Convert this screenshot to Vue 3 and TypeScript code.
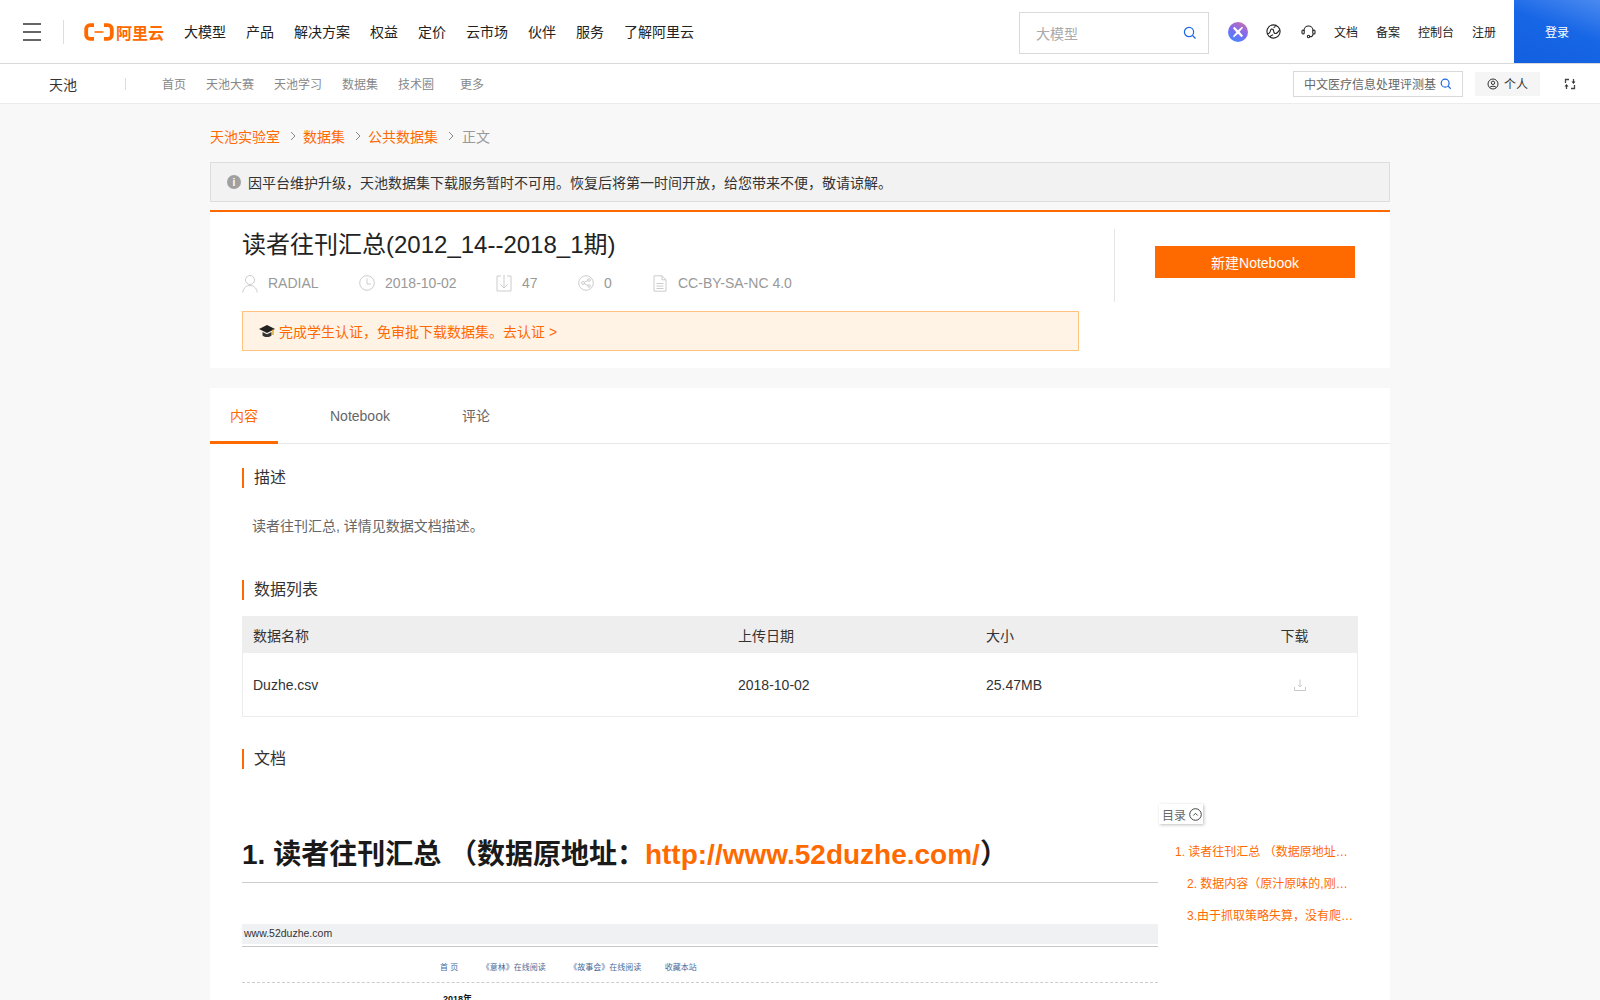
<script setup lang="ts">
const mainNav = ['大模型', '产品', '解决方案', '权益', '定价', '云市场', '伙伴', '服务', '了解阿里云']
const subNav = ['首页', '天池大赛', '天池学习', '数据集', '技术圈']
const links = ['文档', '备案', '控制台', '注册']
const toc = [
  { text: '1. 读者往刊汇总 （数据原地址：http://www.52duzhe.com/）', nested: false },
  { text: '2. 数据内容（原汁原味的,刚爬取下来的数据）', nested: true },
  { text: '3.由于抓取策略失算，没有爬取到全部数据', nested: true },
]
</script>

<template>
  <div class="page">
    <header class="top">
      <div class="burger"><i></i><i></i><i></i></div>
      <span class="top-div"></span>
      <div class="logo">
        <svg width="30" height="18" viewBox="0 0 30 18" fill="none">
          <path d="M10 2.200H6C3.800 2.200 2.200 3.800 2.200 6v6c0 2.200 1.600 3.800 3.800 3.800h4M20 2.200h4c2.200 0 3.800 1.600 3.800 3.800v6c0 2.200-1.600 3.800-3.800 3.800h-4" stroke="#ff6a00" stroke-width="3.800"/>
          <path d="M10.500 9h9" stroke="#ff6a00" stroke-width="1.600"/>
        </svg>
        <span>阿里云</span>
      </div>
      <nav class="main-nav"><a v-for="n in mainNav" :key="n">{{ n }}</a></nav>
      <div class="top-search">
        <span>大模型</span>
        <svg class="ico" width="14" height="14" viewBox="0 0 14 14" fill="none" stroke="#1a66e5" stroke-width="1.200"><circle cx="6" cy="6" r="4.600"/><path d="M9.500 9.500 12.500 12.500"/></svg>
      </div>
      <div class="top-x">
        <svg width="14" height="14" viewBox="0 0 14 14" fill="#fff"><path d="M2 3.200 3.400 1.800 7 5.200l4-3.400 1 1-3.400 4L12 10.800l-1.400 1.400L7 8.800l-4 3.400-1-1 3.400-4z"/></svg>
      </div>
      <svg class="globe" width="15" height="15" viewBox="0 0 15 15" fill="none" stroke="#222" stroke-width="1.100"><circle cx="7.500" cy="7.500" r="6.600"/><path d="M1.200 9.500c1.800.8 3-1.200 3.300-3 .3-1.500 1.500-1.800 2.500-1 1 1 .4 3 1.600 3.800 1.500 1 3.800-1.200 5-3.500M4 13c.7-1.600 1.900-2 3.200-2.300M9.500 1.500C9.200 2.900 8.500 3.400 7.600 3.600"/></svg>
      <svg class="headset" width="15" height="15" viewBox="0 0 15 15" fill="none" stroke="#222" stroke-width="1.100"><path d="M3 7V6.500a4.500 4.500 0 0 1 9 0V7"/><rect x="1" y="6" width="2.200" height="4" rx="1"/><rect x="11.800" y="6" width="2.200" height="4" rx="1"/><path d="M12 10c0 1.800-1.500 2.800-3.300 2.800"/><circle cx="7.500" cy="12.500" r="1.200"/></svg>
      <div class="top-links"><a v-for="l in links" :key="l">{{ l }}</a></div>
      <button class="login">登录</button>
    </header>

    <div class="sub">
      <span class="sub-brand">天池</span>
      <span class="sub-div"></span>
      <nav class="sub-nav">
        <a v-for="n in subNav" :key="n">{{ n }}</a>
        <a class="more">更多</a>
      </nav>
      <div class="sub-search">
        <span>中文医疗信息处理评测基</span>
        <svg width="12" height="12" viewBox="0 0 14 14" fill="none" stroke="#1a66e5" stroke-width="1.400"><circle cx="6" cy="6" r="4.600"/><path d="M9.500 9.500 12.500 12.500"/></svg>
      </div>
      <div class="personal">
        <svg width="12" height="12" viewBox="0 0 12 12" fill="none" stroke="#333"><circle cx="6" cy="6" r="5"/><circle cx="6" cy="4.800" r="1.700"/><path d="M2.800 9.500C3.500 7.800 8.500 7.800 9.200 9.500"/></svg>
        <span>个人</span>
      </div>
      <svg class="swap" width="12" height="12" viewBox="0 0 12 12" fill="none" stroke="#444" stroke-width="1.300"><path d="M5 1.500H1.500v3.500M7 10.500h3.500V7M9.500 1v3M2.500 8v3"/><path d="M7.500 3.500h4L9.500 6zM.5 8.500h4L2.500 6z" fill="#333" stroke="none"/></svg>
    </div>

    <main class="wrap">
      <div class="crumbs">
        <a>天池实验室</a><svg class="chev" width="6" height="10" viewBox="0 0 6 10" fill="none" stroke="#888"><path d="M1 1l4 4-4 4"/></svg>
        <a>数据集</a><svg class="chev" width="6" height="10" viewBox="0 0 6 10" fill="none" stroke="#888"><path d="M1 1l4 4-4 4"/></svg>
        <a>公共数据集</a><svg class="chev" width="6" height="10" viewBox="0 0 6 10" fill="none" stroke="#888"><path d="M1 1l4 4-4 4"/></svg>
        <span>正文</span>
      </div>

      <div class="notice">
        <span class="info">i</span>
        <span>因平台维护升级，天池数据集下载服务暂时不可用。恢复后将第一时间开放，给您带来不便，敬请谅解。</span>
      </div>

      <section class="head-card">
        <div class="head-left">
          <h1>读者往刊汇总(2012_14--2018_1期)</h1>
          <div class="meta">
            <span class="m m1">
              <svg width="16" height="19" viewBox="0 0 16 19" fill="none" stroke="#ccc"><circle cx="8" cy="6" r="4.500"/><path d="M.8 18.500C1.500 13 5 11.500 8 11.500s6.500 1.500 7.200 7"/></svg>
              RADIAL</span>
            <span class="m m2">
              <svg width="16" height="16" viewBox="0 0 16 16" fill="none" stroke="#ccc"><circle cx="8" cy="8" r="7.300"/><path d="M8 3.500V9h4"/></svg>
              2018-10-02</span>
            <span class="m m3">
              <svg width="16" height="18" viewBox="0 0 16 18" fill="none" stroke="#ccc"><path d="M5 2H1v15h14V2h-4M8 1v13M4.500 10.500 8 14l3.500-3.500"/></svg>
              47</span>
            <span class="m m4">
              <svg width="16" height="16" viewBox="0 0 16 16" fill="none" stroke="#ccc"><circle cx="8" cy="8" r="7.300"/><circle cx="5" cy="8" r="1.500"/><circle cx="11" cy="5" r="1.300"/><circle cx="11" cy="11" r="1.300"/><path d="M6.300 7.300 9.800 5.600M6.300 8.700l3.500 1.700"/></svg>
              0</span>
            <span class="m m5">
              <svg width="14" height="17" viewBox="0 0 14 17" fill="none" stroke="#ccc"><path d="M1 .8h8l4 4v11.400H1zM9 .8v4h4M3.500 8.500h7M3.500 11h7M3.500 13.500h7"/></svg>
              CC-BY-SA-NC 4.0</span>
          </div>
          <div class="cert">
            <svg width="16" height="15" viewBox="0 0 16 15"><path d="M8 1 0 5l8 4 8-4z" fill="#222"/><path d="M3.500 8v3.500c2.500 2 6.500 2 9 0V8L8 10.200z" fill="#333"/><path d="M14 5.500V11" stroke="#d9a520" stroke-width="1.400"/></svg>
            <span>完成学生认证，免审批下载数据集。去认证 &gt;</span>
          </div>
        </div>
        <div class="head-right"><button class="nb-btn">新建Notebook</button></div>
      </section>

      <section class="content">
        <div class="tabs">
          <a class="tab active">内容</a>
          <a class="tab">Notebook</a>
          <a class="tab">评论</a>
        </div>
        <div class="body">
          <h2 class="sec first">描述</h2>
          <p class="desc">读者往刊汇总, 详情见数据文档描述。</p>
          <h2 class="sec list-title">数据列表</h2>
          <div class="table">
            <div class="row th">
              <span class="c1">数据名称</span><span class="c2">上传日期</span><span class="c3">大小</span><span class="c4">下载</span>
            </div>
            <div class="row td">
              <span class="c1">Duzhe.csv</span><span class="c2">2018-10-02</span><span class="c3">25.47MB</span>
              <span class="c4"><svg width="12" height="12" viewBox="0 0 12 12" fill="none" stroke="#c8c8c8"><path d="M.5 8v3.500h11V8M6 .5v7M4 5.800 6 7.800l2-2"/></svg></span>
            </div>
          </div>
          <h2 class="sec doc-title">文档</h2>
          <div class="doc">
            <div class="doc-main">
              <h1 class="doc-h1">1. 读者往刊汇总 （数据原地址：<a>http://www.52duzhe.com/</a>）</h1>
              <div class="shot">
                <div class="shot-bar">www.52duzhe.com</div>
                <div class="shot-nav"><span>首 页</span><span>《意林》在线阅读</span><span>《故事会》在线阅读</span><span>收藏本站</span></div>
                <div class="shot-year">2018年</div>
              </div>
            </div>
            <aside class="toc">
              <div class="toc-btn">目录
                <svg width="13" height="13" viewBox="0 0 13 13" fill="none" stroke="#444"><circle cx="6.500" cy="6.500" r="5.800"/><path d="M4.300 7.500 6.500 5.300l2.200 2.200"/></svg>
              </div>
              <a v-for="t in toc" :key="t.text" class="toc-item" :class="{ nested: t.nested }">{{ t.text }}</a>
            </aside>
          </div>
        </div>
      </section>
    </main>
  </div>
</template>

<style>
html, body { margin: 0; background: #f8f8f8; overflow: hidden; }
</style>

<style scoped>
* { box-sizing: border-box; }
.page { height: 1000px; overflow: hidden; font-family: "Liberation Sans", "Noto Sans CJK SC", sans-serif; font-size: 14px; color: #333; background: #f8f8f8; }
a { color: inherit; }

.top { height: 64px; background: #fff; border-bottom: 1px solid #d9d9d9; display: flex; align-items: center; padding-left: 23px; }
.burger { width: 18px; display: flex; flex-direction: column; gap: 6px; }
.burger i { display: block; height: 2px; background: #666; }
.top-div { width: 1px; height: 24px; background: #ddd; margin-left: 22px; }
.logo { display: flex; align-items: center; gap: 2px; margin-left: 20px; color: #ff6a00; font-size: 16px; font-weight: 700; width: 80px; }
.main-nav { display: flex; gap: 20px; margin-left: 20px; color: #222; padding-bottom: 1px; }
.top-search { margin-left: auto; margin-right: 1px; margin-top: 2px; width: 190px; height: 42px; border: 1px solid #d9d9d9; display: flex; align-items: center; justify-content: space-between; padding: 0 11px 0 16px; color: #aaa; }
.top-x { width: 20px; height: 20px; border-radius: 50%; margin-left: 18px; background: linear-gradient(205deg, #d56ca6 0%, #7c6cf0 50%, #3a8cff 100%); display: flex; align-items: center; justify-content: center; }
.globe { margin-left: 18px; }
.headset { margin-left: 20px; }
.top-links { display: flex; gap: 18px; font-size: 12px; color: #222; margin-left: 18px; }
.login { width: 86px; height: 63px; margin-left: 18px; border: 0; color: #fff; font: inherit; font-size: 12px; background: linear-gradient(200deg, #4a8af0 0%, #1766e6 45%, #1260e0 100%); }

.sub { height: 40px; background: #fff; border-bottom: 1px solid #ececec; display: flex; align-items: center; padding-left: 49px; }
.sub-brand { color: #333; font-size: 14px; width: 28px; }
.sub-div { width: 1px; height: 12px; background: #ddd; margin-left: 48px; }
.sub-nav { display: flex; gap: 20px; margin-left: 36px; font-size: 12px; color: #888; }
.sub-nav .more { margin-left: 6px; }
.sub-search { margin-left: auto; width: 170px; height: 26px; border: 1px solid #d9d9d9; display: flex; align-items: center; justify-content: space-between; padding: 0 10px 0 10px; font-size: 12px; color: #666; }
.personal { width: 65px; height: 24px; margin-left: 12px; background: #f5f5f5; display: flex; align-items: center; gap: 5px; padding-left: 12px; font-size: 12px; color: #333; }
.swap { margin: 0 24px 0 24px; }

.wrap { width: 1180px; margin: 0 auto; }
.crumbs { height: 58px; padding-top: 5px; display: flex; align-items: center; color: #ff6a00; }
.crumbs .chev { margin: 0 7px 0 10px; }
.crumbs span { color: #999; margin-left: 1px; }
.notice { height: 40px; background: #f2f2f2; border: 1px solid #ddd; display: flex; align-items: center; gap: 7px; padding-left: 16px; color: #333; }
.info { width: 14px; height: 14px; border-radius: 50%; background: #a0a0a0; color: #fff; font-size: 10px; font-weight: 700; display: flex; align-items: center; justify-content: center; }

.head-card { margin-top: 8px; height: 158px; background: #fff; border-top: 2px solid #ff6a00; display: flex; }
.head-left { width: 904px; padding: 0 0 0 32px; }
.head-left h1 { margin: 16px 0 0; font-size: 24px; font-weight: 400; line-height: 33px; color: #222; }
.meta { display: flex; align-items: center; height: 20px; margin-top: 12px; color: #999; }
.m { display: flex; align-items: center; gap: 10px; }
.m1 { width: 117px; }
.m1 svg { margin-top: 1px; }
.m2 { width: 137px; gap: 10px; }
.m3 { width: 82px; gap: 10px; }
.m4 { width: 75px; gap: 10px; }
.m5 { gap: 11px; }
.cert { margin-top: 18px; width: 837px; height: 40px; border: 1px solid #ffc27f; background: #fff3e6; display: flex; align-items: center; gap: 4px; padding-left: 16px; color: #ff6a00; }
.head-right { margin-top: 17px; height: 73px; width: 276px; border-left: 1px solid #e5e5e5; padding: 17px 0 0 40px; }
.nb-btn { width: 200px; height: 32px; border: 0; background: #ff6a00; color: #fff; font: inherit; }

.content { margin-top: 20px; background: #fff; height: 700px; }
.tabs { display: flex; height: 56px; border-bottom: 1px solid #e8e8e8; gap: 32px; }
.tab { height: 56px; padding: 0 20px; line-height: 56px; color: #666; }
.tab.active { color: #ff6a00; border-bottom: 3px solid #ff6a00; }
.body { padding: 0 32px; }
.sec { margin: 0; height: 20px; line-height: 20px; border-left: 2px solid #ff6a00; padding-left: 10px; font-size: 16px; font-weight: 400; color: #333; }
.first { margin-top: 24px; }
.desc { margin: 28px 0 0 10px; line-height: 20px; color: #666; }
.list-title { margin-top: 44px; }
.table { margin-top: 16px; width: 1116px; border: 1px solid #ececec; border-top: 0; }
.row { display: flex; align-items: center; }
.th { height: 37px; background: #eee; margin: 0 -1px; padding-left: 1px; }
.td { height: 63px; }
.c1 { width: 495px; padding-left: 10px; }
.c2 { width: 248px; }
.c3 { width: 257px; }
.c4 { flex: 1; display: flex; justify-content: center; }
.th .c4 { padding-right: 12px; }
.doc-title { margin-top: 32px; }
.doc { display: flex; margin-top: 27px; }
.doc-main { width: 916px; }
.doc-h1 { margin: 39px 0 0; padding-bottom: 7px; font-size: 28px; line-height: 40px; font-weight: 700; color: #1a1a1a; border-bottom: 1px solid #ccc; }
.doc-h1 a { color: #ff6a00; }
.shot { margin-top: 41px; }
.shot-bar { height: 20px; background: #f0f1f3; font-size: 10.500px; line-height: 18px; padding-left: 2px; color: #333; }
.shot-nav { margin-top: 2px; height: 37px; padding-top: 4px; border-top: 1px solid #c8c8c8; border-bottom: 1px dashed #ccc; display: flex; align-items: center; gap: 23.500px; padding-left: 198px; font-size: 8px; color: #4a6a9a; }
.shot-year { padding: 9px 0 0 201px; font-size: 9px; font-weight: 700; color: #111; }
.toc { width: 200px; display: flex; flex-direction: column; align-items: flex-start; font-size: 12px; }
.toc-btn { width: 44px; height: 20px; margin-top: 8px; margin-left: 1px; padding-left: 3px; display: flex; align-items: center; gap: 3px; color: #666; box-shadow: 1px 1px 3px rgba(0,0,0,.25); white-space: nowrap; }
.toc-item { color: #ff6a00; height: 32px; line-height: 32px; width: 178px; margin-left: 17px; white-space: nowrap; overflow: hidden; text-overflow: ellipsis; }
.toc-btn + .toc-item { margin-top: 12px; }
.toc-item.nested { margin-left: 29px; width: 167px; }
</style>
